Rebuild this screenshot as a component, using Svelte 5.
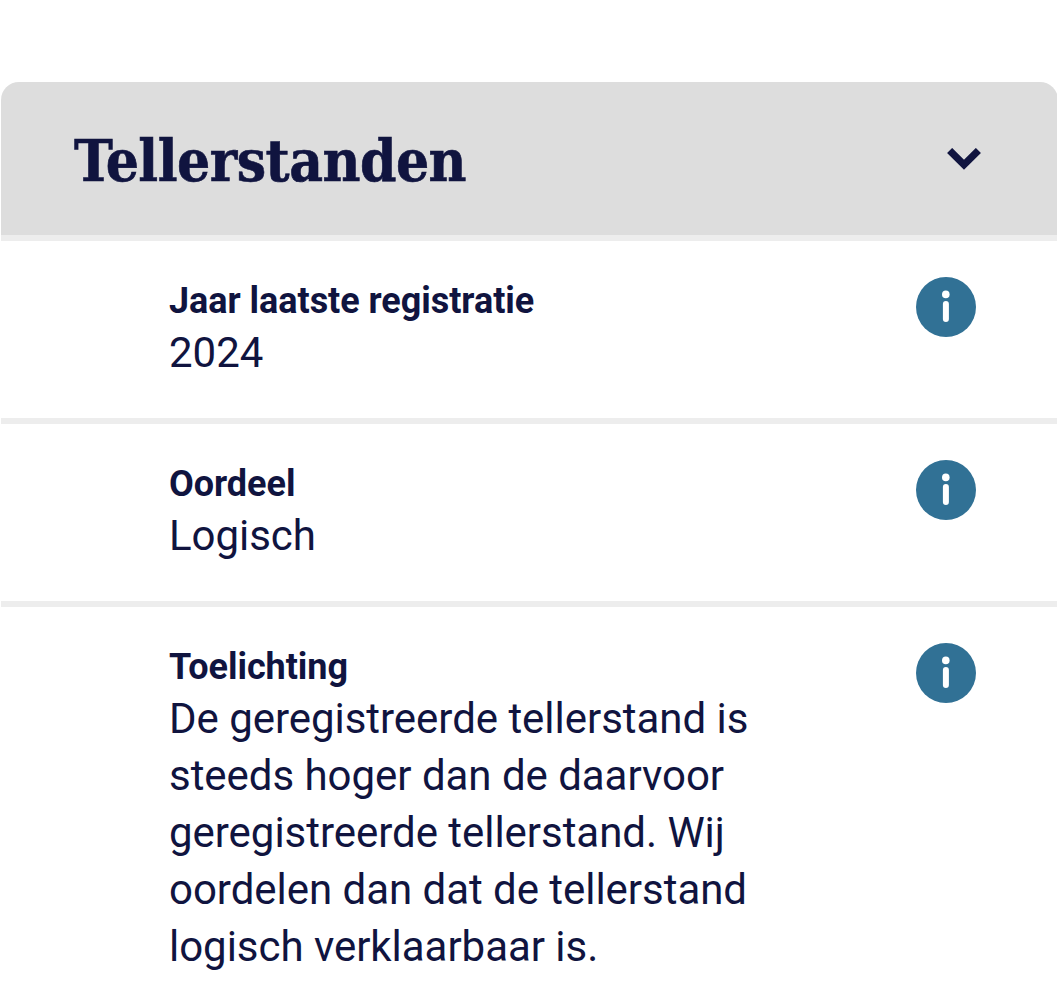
<script>
  const rows = [
    { label: 'Jaar laatste registratie', lines: ['2024'] },
    { label: 'Oordeel', lines: ['Logisch'] },
    {
      label: 'Toelichting',
      lines: [
        'De geregistreerde tellerstand is',
        'steeds hoger dan de daarvoor',
        'geregistreerde tellerstand. Wij',
        'oordelen dan dat de tellerstand',
        'logisch verklaarbaar is.'
      ]
    }
  ];
</script>

<section class="panel">
  <header class="head">
    <h2>Tellerstanden</h2>
    <svg class="chevron" width="34" height="22" viewBox="0 0 34 22" aria-hidden="true">
      <path d="M2.6 2.5 L17 16.7 L31.4 2.5" fill="none" stroke="#10143f" stroke-width="7.2" />
    </svg>
  </header>
  {#each rows as row}
    <div class="row">
      <div class="text">
        <div class="label">{row.label}</div>
        <div class="value">
          {#each row.lines as line}
            <div>{line}</div>
          {/each}
        </div>
      </div>
      <svg class="info" width="60" height="60" viewBox="0 0 60 60" role="img" aria-label="Info">
        <circle cx="30" cy="30" r="30" fill="#317195" />
        <circle cx="29.8" cy="17.4" r="3.8" fill="#fff" />
        <rect x="26.9" y="24" width="6" height="21" rx="3" fill="#fff" />
      </svg>
    </div>
  {/each}
</section>

<style>
  :global(body) {
    background: #fff;
    overflow: hidden;
  }
  .panel {
    margin: 82px -1px 0 1px;
    color: #10143f;
    font-family: Roboto, 'Liberation Sans', sans-serif;
  }
  .head {
    box-sizing: border-box;
    height: 153px;
    padding: 5px 77px 0 73px;
    display: flex;
    align-items: center;
    justify-content: space-between;
    background: #ddd;
    border-radius: 18px 18px 0 0;
  }
  .chevron {
    margin-bottom: 4px;
  }
  h2 {
    margin: 0;
    font: bold 58px/80px 'Roboto Slab', 'DejaVu Serif Condensed', 'DejaVu Serif', serif;
    letter-spacing: -0.5px;
    -webkit-text-stroke: 0.6px currentColor;
    white-space: nowrap;
  }
  .row {
    box-sizing: border-box;
    display: flex;
    justify-content: space-between;
    align-items: flex-start;
    border-top: 6px solid #ededed;
    padding: 36px 82px 37px 168px;
  }
  .label {
    padding-top: 1px;
    font-size: 36px;
    font-weight: 700;
    line-height: 46px;
    letter-spacing: -0.04px;
    white-space: nowrap;
  }
  .value {
    font-size: 42px;
    line-height: 57px;
    letter-spacing: -0.035px;
    white-space: nowrap;
  }
</style>
